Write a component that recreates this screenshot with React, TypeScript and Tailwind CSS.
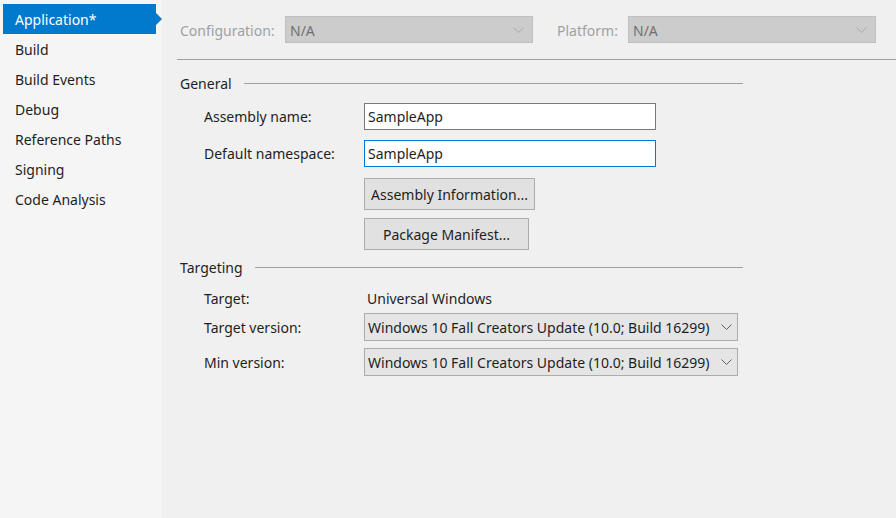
const navItems = ['Application*', 'Build', 'Build Events', 'Debug', 'Reference Paths', 'Signing', 'Code Analysis']

function Chevron({ className }: { className?: string }) {
  return (
    <svg width="11" height="6" viewBox="0 0 11 6" className={className}>
      <path d="M0.5 0.5 L5.5 5.5 L10.5 0.5" fill="none" stroke="currentColor" strokeWidth="1" />
    </svg>
  )
}

function SectionHeader({ title }: { title: string }) {
  return (
    <div className="flex w-[563px] items-center">
      <span className="text-[#1e1e1e]">{title}</span>
      <div className="ml-3 h-px flex-1 bg-[#a0a0a0]" />
    </div>
  )
}

function VersionSelect() {
  return (
    <div className="flex h-[28px] w-[374px] items-center justify-between border border-[#acacac] bg-[#e5e5e5] pl-[3px] pr-[5px]">
      Windows 10 Fall Creators Update (10.0; Build 16299)
      <Chevron className="text-[#606060]" />
    </div>
  )
}

export default function App() {
  return (
    <div
      className="flex h-[518px] w-[896px] overflow-hidden bg-[#f0f0f0] text-[14px] text-[#1e1e1e]"
      style={{ fontFamily: '"Segoe UI", "Noto Sans", sans-serif' }}
    >
      <nav className="flex w-[162px] shrink-0 flex-col bg-[#f5f5f5] pt-1">
        {navItems.map((item, i) =>
          i === 0 ? (
            <div key={item} className="relative ml-[3px] mr-[6px] flex h-[30px] items-center bg-[#007acc] pl-3 text-white">
              {item}
              <div className="absolute right-[-6px] top-[9px] h-0 w-0 border-y-[6px] border-l-[6px] border-y-transparent border-l-[#007acc]" />
            </div>
          ) : (
            <div key={item} className="flex h-[30px] items-center pl-[15px]">
              {item}
            </div>
          ),
        )}
      </nav>

      <main className="flex-1">
        <div className="flex items-center pl-[18px] pt-4">
          <span className="w-[105px] pt-px text-[#a0a0a0]">Configuration:</span>
          <div className="flex h-[27px] w-[248px] items-center justify-between border border-[#bfbfbf] bg-[#cccccc] pl-1 pr-2 pt-px text-[#707070]">
            N/A
            <Chevron className="text-[#a8a8a8]" />
          </div>
          <span className="ml-6 w-[71px] pt-px text-[#a0a0a0]">Platform:</span>
          <div className="flex h-[27px] w-[248px] items-center justify-between border border-[#bfbfbf] bg-[#cccccc] pl-1 pr-2 pt-px text-[#707070]">
            N/A
            <Chevron className="text-[#a8a8a8]" />
          </div>
        </div>

        <div className="ml-[15px] mt-4 h-px bg-[#a0a0a0]" />

        <div className="pl-[18px] pt-[13px]">
          <SectionHeader title="General" />

          <div className="mt-[9px] pl-6">
            <div className="flex items-center">
              <span className="w-[160px]">Assembly name:</span>
              <div className="flex h-[27px] w-[292px] items-center border border-[#7a7a7a] bg-white pl-[3px]">SampleApp</div>
            </div>
            <div className="mt-[10px] flex items-center">
              <span className="w-[160px]">Default namespace:</span>
              <div className="flex h-[27px] w-[292px] items-center border border-[#0078d7] bg-white pl-[3px]">SampleApp</div>
            </div>
            <div className="ml-[160px] mt-[11px] flex flex-col items-start gap-2">
              <button className="h-[32px] w-[171px] border border-[#adadad] bg-[#e1e1e1]">Assembly Information...</button>
              <button className="h-[32px] w-[165px] border border-[#adadad] bg-[#e1e1e1]">Package Manifest...</button>
            </div>
          </div>

          <div className="mt-[7px]">
            <SectionHeader title="Targeting" />
          </div>

          <div className="mt-[9px] pl-6">
            <div className="flex h-[22px] items-center">
              <span className="w-[163px]">Target:</span>
              <span>Universal Windows</span>
            </div>
            <div className="mt-[4px] flex items-center">
              <span className="w-[160px]">Target version:</span>
              <VersionSelect />
            </div>
            <div className="mt-[7px] flex items-center">
              <span className="w-[160px]">Min version:</span>
              <VersionSelect />
            </div>
          </div>
        </div>
      </main>
    </div>
  )
}
